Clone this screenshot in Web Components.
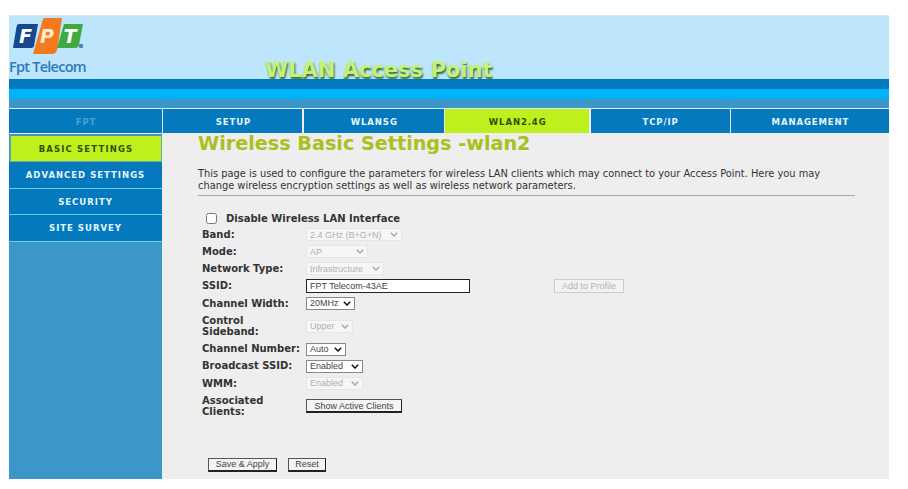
<!DOCTYPE html>
<html lang="en">
<head>
<meta charset="utf-8">
<title>WLAN Access Point</title>
<style>
  html, body { margin: 0; background: #fff; }
  body { padding: 15px 19px 10px 9px; font-family: "DejaVu Sans", sans-serif; }
  router-page { width: 880px; }
</style>
</head>
<body>
<router-page>
  <router-header slot="header" title-text="WLAN Access Point"></router-header>
  <router-tabs slot="tabs">
    <router-tab muted>FPT</router-tab>
    <router-tab>SETUP</router-tab>
    <router-tab>WLANSG</router-tab>
    <router-tab active>WLAN2.4G</router-tab>
    <router-tab>TCP/IP</router-tab>
    <router-tab>MANAGEMENT</router-tab>
  </router-tabs>
  <router-sidenav slot="side">
    <router-sideitem active>BASIC SETTINGS</router-sideitem>
    <router-sideitem>ADVANCED SETTINGS</router-sideitem>
    <router-sideitem>SECURITY</router-sideitem>
    <router-sideitem>SITE SURVEY</router-sideitem>
  </router-sidenav>
  <wlan-basic-settings slot="main"></wlan-basic-settings>
</router-page>

<script>
// Small helper so each element just declares its html once
function shadow(el, html) {
    el.attachShadow({ mode: 'open' }).innerHTML = html;
}

// chevrons for the selects, vector only (colour without the #, it has to be escaped)
const chevron = (hex) => `url("data:image/svg+xml,%3Csvg xmlns='http://www.w3.org/2000/svg' width='8' height='5'%3E%3Cpath d='M.8 .8 4 4 7.2 .8' fill='none' stroke='%23${hex}' stroke-width='1.5'/%3E%3C/svg%3E")`;

class RouterPage extends HTMLElement {
    connectedCallback() {
        shadow(this, `
      <style>
        :host { display: block; border-top: 1px solid #e4e4e4; }
        .body { display: grid; grid-template-columns: 154px 726px; height: 345px; background: #eeeeee; }
      </style>
      <slot name="header"></slot>
      <slot name="tabs"></slot>
      <div class="body">
        <slot name="side"></slot>
        <slot name="main"></slot>
      </div>`);
    }
}

class RouterHeader extends HTMLElement {
    connectedCallback() {
        const title = this.getAttribute('title-text') || '';
        shadow(this, `
      <style>
        :host { display: block; }
        .top { height: 63px; background: #bde5fb; position: relative; display: flex; }
        .logo { width: 256px; flex: none; display: flex; flex-direction: column; }
        svg { display: block; margin: 1px 0 0 3px; }
        .brand { font: 600 14.5px/15px "Open Sans", sans-serif; color: #2b7bb9; letter-spacing: -0.75px; margin-top: 4px; }
        h1 { margin: 43px 0 0; font: bold 21px/22px "DejaVu Sans", sans-serif; color: #c6f176;
             text-shadow: 1px 2px 2px #2c6a3a; white-space: nowrap; position: relative; z-index: 1; height: 20px; }
        .band1 { height: 10px; background: #0479bd; }
        .band2 { height: 10px; background: #00b4fa; }
        .band3 { height: 9px; background: #3c96c8; }
      </style>
      <div class="top">
        <div class="logo">
          <svg width="76" height="38" viewBox="0 0 76 38" aria-label="FPT">
            <path d="M7 7 H26 L22 29 Q21.6 31 19 31 H1 L4.5 10 Q5 7 7 7 Z" fill="#17488f"/>
            <path d="M31 2 Q31.5 1 33 1 H50 L45 33 Q44 37 40 37 H21 Z" fill="#f47a1f"/>
            <path d="M52 7 H71 L67 28 Q66.5 31 63 31 H45 Z" fill="#3faa3f"/>
            <g font-family="DejaVu Sans" font-weight="bold" font-style="italic" font-size="19" fill="#fff" text-anchor="middle">
              <text x="13.5" y="26">F</text>
              <text x="35" y="26" fill="#ffe9c8">P</text>
              <text x="58" y="26">T</text>
            </g>
            <circle cx="69" cy="29" r="2.2" fill="#4a7fb5"/>
          </svg>
          <div class="brand">Fpt Telecom</div>
        </div>
        <h1>${title}</h1>
      </div>
      <div class="band1"></div>
      <div class="band2"></div>
      <div class="band3"></div>`);
    }
}

class RouterTabs extends HTMLElement {
    connectedCallback() {
        shadow(this, `
      <style>
        :host { display: grid; grid-template-columns: 153px 139px 140px 144px 139px 158px; column-gap: 1.4px;
                border-top: 1px solid #d8eef8; height: 25px; background: #eeeeee; }
      </style>
      <slot></slot>`);
    }
}

class RouterTab extends HTMLElement {
    connectedCallback() {
        shadow(this, `
      <style>
        :host { display: flex; align-items: center; justify-content: center; height: 23px; padding: 1px 0 0 1px; background: #0479bd;
                color: #e4f6ff; font: bold 8.5px "DejaVu Sans", sans-serif; letter-spacing: 0.9px; }
        :host([active]) { background: #bef01e; color: #33510a; }
        :host([muted]) { color: #4fa2cf; }
      </style>
      <slot></slot>`);
    }
}

class RouterSidenav extends HTMLElement {
    connectedCallback() {
        shadow(this, `
      <style>
        :host { display: flex; flex-direction: column; background: #3c96c8; padding-top: 1px; margin-right: 1px; }
      </style>
      <slot></slot>`);
    }
}

class RouterSideitem extends HTMLElement {
    connectedCallback() {
        shadow(this, `
      <style>
        :host { display: flex; align-items: center; justify-content: center; height: 25.7px; background: #0479bd;
                border-bottom: 1px solid #6ccdf2; color: #e4f6ff;
                font: bold 8.5px "DejaVu Sans", sans-serif; letter-spacing: 1px; }
        :host([active]) { background: #bef01e; color: #33510a; border: 1px solid #6aa9a8; border-top-color: #3c96c8; height: 25px; margin-left: 1px; letter-spacing: 1.15px; }
      </style>
      <slot></slot>`);
    }
}

class FormRow extends HTMLElement {
    connectedCallback() {
        const label = this.getAttribute('label');
        shadow(this, `
      <style>
        :host { display: grid; grid-template-columns: 104px auto; align-items: center; min-height: 17.2px; }
        :host([tall]) { min-height: 28.5px; }
        .lbl { font: bold 10px/11.5px "DejaVu Sans", sans-serif; color: #333; max-width: 100px; }
        .val { display: flex; align-items: center; }
      </style>
      <div class="lbl">${label}</div>
      <div class="val"><slot></slot></div>`);
    }
}

class WlanBasicSettings extends HTMLElement {
    connectedCallback() {
        shadow(this, `
      <style>
        :host { display: block; padding-left: 35px; color: #333; font-family: "DejaVu Sans", sans-serif; }
        h2 { margin: 0; font: bold 19.2px/19px "DejaVu Sans", sans-serif; color: #a9c01f; white-space: nowrap; }
        p { margin: 15px 0 0; width: 657px; font-size: 9.85px; line-height: 12px; color: #333; border-bottom: 1px solid #a8a8a8; padding-bottom: 3px; }
        .disable { display: flex; align-items: center; margin: 15px 0 0 8px; height: 14px; font: bold 10px "DejaVu Sans", sans-serif; }
        .disable input { width: 11px; height: 11px; margin: 0 9px 0 0; }
        .rows { margin: 1px 0 0 4px; }
        select, button, input[type=text] { font: 9px "Liberation Sans", Arial, sans-serif; color: #444; box-sizing: border-box; }
        select { appearance: none; height: 13px; padding: 0 0 0 3px; border: 1px solid #888; border-radius: 0;
                 background: #fff ${chevron('111111')} no-repeat right 3px center; }
        select:disabled { color: #b0b0b0; border-color: #e6e6e6; opacity: 1;
                 background: #f6f6f6 ${chevron('aaaaaa')} no-repeat right 3px center; }
        input[type=text] { width: 164px; height: 14px; padding: 0 3px; border: 1px solid #222; background: #fff; border-radius: 0; }
        button { height: 14px; padding: 0; background: #f4f4f4; border: 1px solid #555; border-right-color: #222; border-bottom: 2px solid #222; border-radius: 0; }
        button:disabled { color: #b4b4b4; background: #f2f2f2; border: 1px solid #ccc; }
        .add { margin-left: 84px; width: 70px; }
        .actions { display: flex; gap: 11px; margin: 37px 0 0 10px; }
      </style>
      <h2>Wireless Basic Settings -wlan2</h2>
      <p>This page is used to configure the parameters for wireless LAN clients which may connect to your Access Point. Here you may change wireless encryption settings as well as wireless network parameters.</p>
      <label class="disable"><input type="checkbox">Disable Wireless LAN Interface</label>
      <div class="rows">
        <form-row label="Band:"><select disabled style="width:96px"><option>2.4 GHz (B+G+N)</option></select></form-row>
        <form-row label="Mode:"><select disabled style="width:62px"><option>AP</option></select></form-row>
        <form-row label="Network Type:"><select disabled style="width:78px"><option>Infrastructure</option></select></form-row>
        <form-row label="SSID:"><input type="text" value="FPT Telecom-43AE"><button class="add" disabled>Add to Profile</button></form-row>
        <form-row label="Channel Width:"><select style="width:49px"><option>20MHz</option></select></form-row>
        <form-row tall label="Control Sideband:"><select disabled style="width:47px"><option>Upper</option></select></form-row>
        <form-row label="Channel Number:"><select style="width:40px"><option>Auto</option></select></form-row>
        <form-row label="Broadcast SSID:"><select style="width:57px"><option>Enabled</option></select></form-row>
        <form-row label="WMM:"><select disabled style="width:57px"><option>Enabled</option></select></form-row>
        <form-row tall label="Associated Clients:"><button style="width:96px">Show Active Clients</button></form-row>
      </div>
      <div class="actions">
        <button style="width:69px">Save &amp; Apply</button>
        <button style="width:38px">Reset</button>
      </div>`);
    }
}

customElements.define('router-page', RouterPage);
customElements.define('router-header', RouterHeader);
customElements.define('router-tabs', RouterTabs);
customElements.define('router-tab', RouterTab);
customElements.define('router-sidenav', RouterSidenav);
customElements.define('router-sideitem', RouterSideitem);
customElements.define('form-row', FormRow);
customElements.define('wlan-basic-settings', WlanBasicSettings);
</script>
</body>
</html>
